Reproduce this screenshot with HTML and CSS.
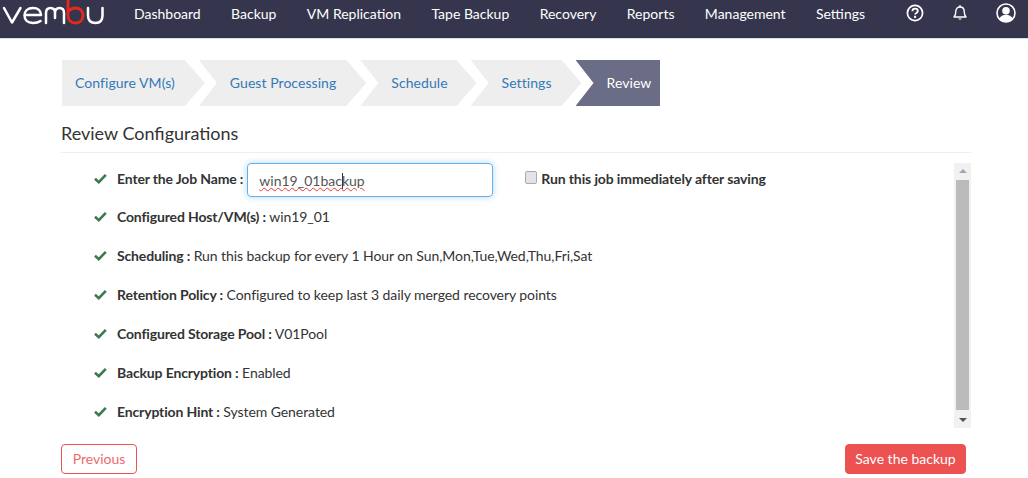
FILE: index.html
```html
<!DOCTYPE html>
<html lang="en">
<head>
  <meta charset="UTF-8" />
  <meta name="viewport" content="width=device-width, initial-scale=1.0" />
  <title>Review Configurations</title>
  <link rel="stylesheet" href="styles.css">
</head>
<body>
  <!-- Top bar -->
  <header class="topbar">
    <svg class="logo" width="106" height="26" viewBox="0 0 106 26" fill="none" stroke-width="2.5" stroke-linecap="round" stroke-linejoin="round" role="img" aria-label="vembu">
      <path stroke="#fff" d="M4 8 L12 22.5 L20.5 8" />
      <path stroke="#fff" d="M24.5 15 H41 C41 10.5 37.5 8 33 8 C27.5 8 24.5 11 24.5 15.5 C24.5 20 27.5 23 33 23 C36 23 38.5 22.5 40.5 21" />
      <path stroke="#fff" d="M46 23 V13 C46 9.5 48 8 50.5 8 C53.5 8 55 9.5 55 13 V18 M55 13 C55 9.5 57 8 59.5 8 C62.5 8 64 9.5 64 13 V23" />
      <path stroke="#e8261c" stroke-width="2.8" d="M68 0 V15.5 C68 20 71 23 75.5 23 C80 23 83 20 83 15.5 C83 11 80 8 75.5 8 C73 8 70.5 9 68.5 11" />
      <path stroke="#fff" d="M88 8 V15.5 C88 20.5 91 23 95.5 23 C100 23 102.5 20.5 102.5 15.5 V8" />
    </svg>
    <nav class="mainnav">
      <a href="#">Dashboard</a>
      <a href="#">Backup</a>
      <a href="#">VM Replication</a>
      <a href="#">Tape Backup</a>
      <a href="#">Recovery</a>
      <a href="#">Reports</a>
      <a href="#">Management</a>
      <a href="#">Settings</a>
    </nav>
    <div class="topicons">
      <svg width="18" height="18" viewBox="0 0 18 18" fill="none" stroke="#fff">
        <circle cx="9" cy="9" r="7.6" stroke-width="1.7" />
        <path d="M6.4 7.2 C6.4 5.6 7.6 4.7 9.1 4.7 C10.7 4.7 11.8 5.6 11.8 7 C11.8 8.9 9.1 8.9 9.1 10.6" stroke-width="1.8" />
        <rect x="8" y="11.8" width="2.1" height="2.1" fill="#fff" stroke="none" />
      </svg>
      <svg class="bell" width="16" height="18" viewBox="0 0 16 18" fill="none" stroke="#fff" stroke-width="1.4">
        <path d="M2 13 C3.5 11.5 3.8 10 3.8 7.5 C3.8 4.6 5.5 3 8 3 C10.5 3 12.2 4.6 12.2 7.5 C12.2 10 12.5 11.5 14 13 Z" stroke-linejoin="round" />
        <path d="M6.4 14.6 C6.8 16.2 9.2 16.2 9.6 14.6 Z" fill="#fff" stroke="none" />
        <rect x="7.2" y="1.3" width="1.6" height="2" fill="#fff" stroke="none" />
      </svg>
      <svg class="avatar" width="20" height="20" viewBox="0 0 20 20">
        <circle cx="10" cy="10" r="9" fill="#35364d" stroke="#fff" stroke-width="1.6" />
        <circle cx="10" cy="7.8" r="3.8" fill="#fff" />
        <path d="M3.2 16 C4.5 12.8 7 11.8 10 11.8 C13 11.8 15.5 12.8 16.8 16 C15 18.2 12.6 19 10 19 C7.4 19 5 18.2 3.2 16 Z" fill="#fff" />
      </svg>
    </div>
  </header>

  <main class="page">
    <!-- Wizard steps -->
    <ol class="steps">
      <li class="step step-first"><a href="#">Configure VM(s)</a></li>
      <li class="step"><a href="#">Guest Processing</a></li>
      <li class="step step-short"><a href="#">Schedule</a></li>
      <li class="step"><a href="#">Settings</a></li>
      <li class="step step-current"><a href="#">Review</a></li>
    </ol>

    <h2 class="title">Review Configurations</h2>

    <div class="review">
      <ul class="summary">
        <li class="row">
          <svg class="tick" width="13" height="11" viewBox="0 0 13 11"><path d="M1 5.8 L4.8 9.2 L11.8 1.8" fill="none" stroke="#3c7a4e" stroke-width="2.6" /></svg>
          <b>Enter the Job Name :</b>
          <div class="jobname"><span class="misspelt">win19_01bac<i class="caret"></i>kup</span></div>
          <label class="runnow"><input type="checkbox" />Run this job immediately after saving</label>
        </li>
        <li class="row">
          <svg class="tick" width="13" height="11" viewBox="0 0 13 11"><path d="M1 5.8 L4.8 9.2 L11.8 1.8" fill="none" stroke="#3c7a4e" stroke-width="2.6" /></svg>
          <p><b>Configured Host/VM(s) :</b> win19_01</p>
        </li>
        <li class="row">
          <svg class="tick" width="13" height="11" viewBox="0 0 13 11"><path d="M1 5.8 L4.8 9.2 L11.8 1.8" fill="none" stroke="#3c7a4e" stroke-width="2.6" /></svg>
          <p><b>Scheduling :</b> Run this backup for every 1 Hour on Sun,Mon,Tue,Wed,Thu,Fri,Sat</p>
        </li>
        <li class="row">
          <svg class="tick" width="13" height="11" viewBox="0 0 13 11"><path d="M1 5.8 L4.8 9.2 L11.8 1.8" fill="none" stroke="#3c7a4e" stroke-width="2.6" /></svg>
          <p><b>Retention Policy :</b> Configured to keep last 3 daily merged recovery points</p>
        </li>
        <li class="row">
          <svg class="tick" width="13" height="11" viewBox="0 0 13 11"><path d="M1 5.8 L4.8 9.2 L11.8 1.8" fill="none" stroke="#3c7a4e" stroke-width="2.6" /></svg>
          <p><b>Configured Storage Pool :</b> V01Pool</p>
        </li>
        <li class="row">
          <svg class="tick" width="13" height="11" viewBox="0 0 13 11"><path d="M1 5.8 L4.8 9.2 L11.8 1.8" fill="none" stroke="#3c7a4e" stroke-width="2.6" /></svg>
          <p><b>Backup Encryption :</b> Enabled</p>
        </li>
        <li class="row">
          <svg class="tick" width="13" height="11" viewBox="0 0 13 11"><path d="M1 5.8 L4.8 9.2 L11.8 1.8" fill="none" stroke="#3c7a4e" stroke-width="2.6" /></svg>
          <p><b>Encryption Hint :</b> System Generated</p>
        </li>
      </ul>
      <div class="scrollbar">
        <span class="arrow-up"></span>
        <span class="thumb"></span>
        <span class="arrow-down"></span>
      </div>
    </div>

    <div class="actions">
      <button class="btn btn-outline">Previous</button>
      <button class="btn btn-save">Save the backup</button>
    </div>
  </main>
</body>
</html>
```

FILE: styles.css
```css
* {
  box-sizing: border-box;
}
body {
  margin: 0;
  height: 478px;
  overflow: hidden;
  background: #fff;
  color: #333;
  font-family: Lato, "Liberation Sans", sans-serif;
  font-size: 14px;
}
a {
  text-decoration: none;
}

/* Top bar */
.topbar {
  display: flex;
  align-items: center;
  height: 38px;
  background-color: #35364d;
  box-shadow: 0 1px 0 #ddd;
}
.logo {
  flex: none;
  align-self: flex-start;
  margin-right: 28px;
}
.mainnav {
  display: flex;
  gap: 30.4px;
  margin-top: -12px;
}
.mainnav a {
  color: #fff;
  white-space: nowrap;
}
.topicons {
  display: flex;
  align-items: center;
  margin-left: auto;
  margin-right: 12px;
  margin-top: -13px;
  gap: 28px;
}

/* Page */
.page {
  padding: 22px 57px 0 61px;
}

/* Wizard steps */
.steps {
  display: flex;
  list-style: none;
  margin: 0 0 0 1px;
  padding: 0;
}
.step {
  height: 46px;
  margin-left: -6px;
  background-color: #eee;
  letter-spacing: 0.06px;
  clip-path: polygon(0 0, calc(100% - 20px) 0, 100% 50%, calc(100% - 20px) 100%, 0 100%, 18px 50%);
}
.step a {
  display: block;
  padding: 0 30px 0 31px;
  line-height: 46px;
  color: #337ab7;
}
.step-first {
  margin-left: 0;
  clip-path: polygon(0 0, calc(100% - 20px) 0, 100% 50%, calc(100% - 20px) 100%, 0 100%);
}
.step-first a {
  padding-left: 13px;
}
.step-short a {
  padding-right: 29px;
}
.step-current {
  background-color: #6b6c85;
  clip-path: polygon(0 0, 100% 0, 100% 100%, 0 100%, 18px 50%);
}
.step-current a {
  padding-right: 9px;
  color: #fff;
}

.title {
  margin: 16px 0 0;
  padding-bottom: 8px;
  border-bottom: 1px solid #eee;
  font-size: 18px;
  font-weight: 400;
  line-height: 22px;
}

/* Summary list with its scrollbar */
.review {
  display: flex;
  justify-content: space-between;
  height: 265px;
  margin-top: 10px;
}
.summary {
  list-style: none;
  margin: 0;
  padding: 0 0 0 33px;
}
.row {
  display: flex;
  align-items: center;
  height: 39px;
}
.row:first-child {
  height: 34px;
}
.row p {
  margin: 0;
  letter-spacing: -0.07px;
}
.row b {
  font-weight: 700;
  letter-spacing: -0.15px;
}
.row:first-child b {
  margin-top: -3px;
}
.tick {
  flex: none;
  margin-right: 10px;
}
.row:first-child .tick {
  margin-top: -3px;
}
.jobname {
  width: 246px;
  height: 34px;
  margin-left: 4px;
  padding: 0 11px;
  line-height: 33px;
  border: 1px solid #66afe9;
  border-radius: 4px;
  box-shadow: 0 0 6px rgba(102, 175, 233, 0.5);
  color: #555;
}
.misspelt {
  text-decoration: underline wavy #e33;
  text-decoration-thickness: 1px;
}
.caret {
  display: inline-block;
  width: 1px;
  height: 16px;
  margin: 0 -1px 0 0;
  vertical-align: -3px;
  background-color: #333;
}
.runnow {
  display: flex;
  align-items: center;
  margin-left: 32px;
  margin-top: -3px;
  font-weight: 700;
  letter-spacing: -0.12px;
}
.runnow input {
  appearance: none;
  width: 12px;
  height: 13px;
  margin: 0 4px 0 0;
  position: relative;
  top: -1px;
  background-color: #e4e4e8;
  border: 1px solid #a9a9ae;
  border-radius: 2px;
}
.scrollbar {
  display: flex;
  flex-direction: column;
  align-items: center;
  width: 17px;
  height: 100%;
  background-color: #f1f1f1;
}
.thumb {
  flex: 1;
  width: 13px;
  background-color: #bbb;
}
.arrow-up,
.arrow-down {
  flex: none;
  width: 0;
  height: 0;
  border-left: 4px solid transparent;
  border-right: 4px solid transparent;
}
.arrow-up {
  margin: 6px 0 7px;
  border-bottom: 4px solid #a5a0b5;
}
.arrow-down {
  margin: 8px 0 6px;
  border-top: 4px solid #505060;
}

/* Bottom buttons */
.actions {
  display: flex;
  justify-content: space-between;
  margin-top: 16px;
  padding-right: 5px;
}
.btn {
  height: 30px;
  padding: 0 0 2px;
  border-radius: 4px;
  font-family: inherit;
  font-size: 14px;
}
.btn-outline {
  width: 76px;
  border: 1px solid #ec5252;
  background-color: #fff;
  color: #ec6a6a;
}
.btn-save {
  width: 121px;
  border: 1px solid #ec5252;
  background-color: #ec5252;
  color: #fff;
}
```
